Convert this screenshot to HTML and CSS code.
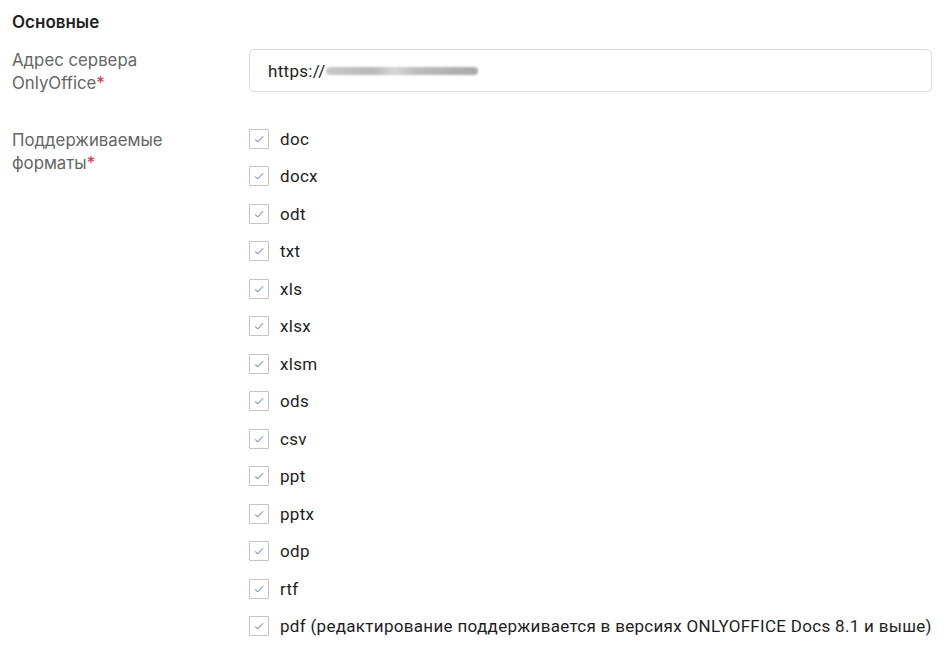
FILE: index.html
```html
<!DOCTYPE html>
<html lang="ru">
<head>
<meta charset="utf-8">
<link rel="stylesheet" href="styles.css">
</head>
<body>
<div class="page">
  <h2 class="title">Основные</h2>
  <div class="row">
    <div class="label">Адрес сервера OnlyOffice<span class="req">*</span></div>
    <div class="field">
      <div class="input"><span>https://</span><span class="blur"></span></div>
    </div>
  </div>
  <div class="row formats">
    <div class="label">Поддерживаемые форматы<span class="req">*</span></div>
    <div class="field list">
      <label class="cb"><span class="box"><svg viewBox="0 0 20 20"><path d="M5.5 10.3l3 3 6-6.3"/></svg></span>doc</label>
      <label class="cb"><span class="box"><svg viewBox="0 0 20 20"><path d="M5.5 10.3l3 3 6-6.3"/></svg></span>docx</label>
      <label class="cb"><span class="box"><svg viewBox="0 0 20 20"><path d="M5.5 10.3l3 3 6-6.3"/></svg></span>odt</label>
      <label class="cb"><span class="box"><svg viewBox="0 0 20 20"><path d="M5.5 10.3l3 3 6-6.3"/></svg></span>txt</label>
      <label class="cb"><span class="box"><svg viewBox="0 0 20 20"><path d="M5.5 10.3l3 3 6-6.3"/></svg></span>xls</label>
      <label class="cb"><span class="box"><svg viewBox="0 0 20 20"><path d="M5.5 10.3l3 3 6-6.3"/></svg></span>xlsx</label>
      <label class="cb"><span class="box"><svg viewBox="0 0 20 20"><path d="M5.5 10.3l3 3 6-6.3"/></svg></span>xlsm</label>
      <label class="cb"><span class="box"><svg viewBox="0 0 20 20"><path d="M5.5 10.3l3 3 6-6.3"/></svg></span>ods</label>
      <label class="cb"><span class="box"><svg viewBox="0 0 20 20"><path d="M5.5 10.3l3 3 6-6.3"/></svg></span>csv</label>
      <label class="cb"><span class="box"><svg viewBox="0 0 20 20"><path d="M5.5 10.3l3 3 6-6.3"/></svg></span>ppt</label>
      <label class="cb"><span class="box"><svg viewBox="0 0 20 20"><path d="M5.5 10.3l3 3 6-6.3"/></svg></span>pptx</label>
      <label class="cb"><span class="box"><svg viewBox="0 0 20 20"><path d="M5.5 10.3l3 3 6-6.3"/></svg></span>odp</label>
      <label class="cb"><span class="box"><svg viewBox="0 0 20 20"><path d="M5.5 10.3l3 3 6-6.3"/></svg></span>rtf</label>
      <label class="cb"><span class="box"><svg viewBox="0 0 20 20"><path d="M5.5 10.3l3 3 6-6.3"/></svg></span>pdf (редактирование поддерживается в версиях ONLYOFFICE Docs 8.1 и выше)</label>
    </div>
  </div>
</div>
</body>
</html>
```

FILE: styles.css
```css
html, body {
  margin: 0;
  padding: 0;
  background: #fff;
}
.page {
  padding: 10px 12px 0 12px;
  font-family: Inter, "Noto Sans", sans-serif;
}
.title {
  margin: 0 0 15px 0;
  font-size: 17px;
  font-weight: 600;
  line-height: 24px;
  color: #1f1f1f;
}
.row {
  display: flex;
}
.label {
  width: 237px;
  flex: none;
  box-sizing: border-box;
  padding-right: 76px;
  font-size: 16.8px;
  line-height: 23px;
  color: #666;
}
.req {
  color: #e0303a;
}
.field {
  flex: 1;
}
.input {
  height: 43px;
  box-sizing: border-box;
  border: 1px solid #dcdcdc;
  border-radius: 5px;
  display: flex;
  align-items: center;
  padding-left: 18px;
  font-family: Roboto, "Liberation Sans", sans-serif;
  font-size: 17px;
  letter-spacing: 0.3px;
  color: #222;
}
.blur {
  display: inline-block;
  width: 152px;
  height: 8px;
  margin-top: 1px;
  border-radius: 4px;
  background: linear-gradient(90deg, #c8c8c8, #b8b8b8 30%, #d5d5d5 45%, #bdbdbd 60%, #a8a8a8 100%);
  filter: blur(1.2px);
}
.formats {
  margin-top: 34px;
}
.list {
  display: flex;
  flex-direction: column;
  margin-top: -9px;
}
.cb {
  display: flex;
  align-items: center;
  height: 37.5px;
  font-family: Roboto, "Liberation Sans", sans-serif;
  font-size: 17px;
  letter-spacing: 0.3px;
  color: #1e1e1e;
}
.box {
  width: 20px;
  height: 20px;
  box-sizing: border-box;
  border: 1px solid #c4c4c4;
  border-radius: 1px;
  margin-right: 11px;
  flex: none;
  display: flex;
}
.box svg {
  width: 18px;
  height: 18px;
  fill: none;
  stroke: #3d72c0;
  stroke-width: 1.1;
}
```
